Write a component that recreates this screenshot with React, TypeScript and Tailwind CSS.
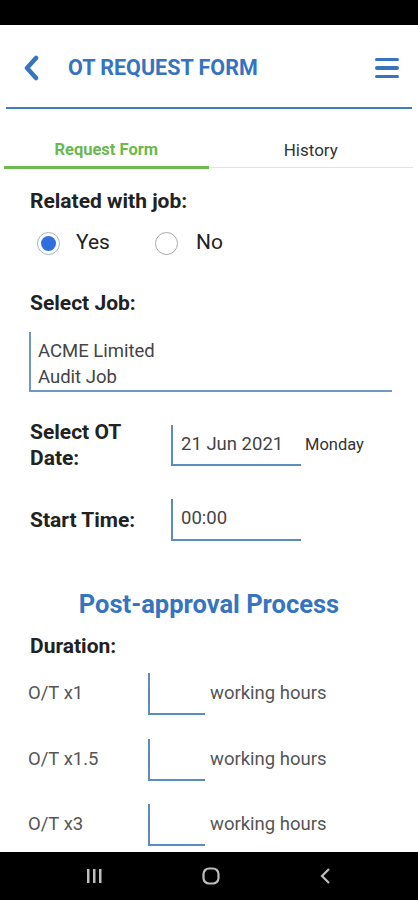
import React from "react";

const BLUE = "#3674bf";

function Radio({ checked }: { checked: boolean }) {
  return checked ? (
    <span className="flex h-[23px] w-[23px] items-center justify-center rounded-full border-[1.5px] border-[#9db5d6]">
      <span className="block h-[15px] w-[15px] rounded-full bg-[#2f6fe0]" />
    </span>
  ) : (
    <span className="block h-[23px] w-[23px] rounded-full border-[1.5px] border-[#a9a9a9]" />
  );
}

function DurRow({ label, mt }: { label: string; mt: string }) {
  return (
    <div className={`flex items-center -ml-[2px] ${mt}`}>
      <div className="w-[120px] text-[18.5px] text-[#555]">{label}</div>
      <div className="h-[42px] w-[57px] border-l-2 border-b-2 border-[#5a8cc2]" />
      <div className="ml-[5px] text-[18.5px] text-[#555]">working hours</div>
    </div>
  );
}

export default function App() {
  return (
    <div className="w-[418px] h-[900px] bg-white overflow-hidden flex flex-col" style={{ fontFamily: "Roboto, 'Liberation Sans', sans-serif" }}>
      <div className="h-[25px] bg-black shrink-0" />
      {/* header */}
      <div className="h-[82px] pt-1 flex items-center shrink-0">
        <svg className="ml-[22px]" width="20" height="26" viewBox="0 0 20 26">
          <path d="M14 3 L5 13 L14 23" fill="none" stroke={BLUE} strokeWidth="4.5" strokeLinecap="round" strokeLinejoin="round" />
        </svg>
        <div className="ml-[26px] text-[21.5px] font-bold text-[#3674bf]">OT REQUEST FORM</div>
        <div className="ml-auto mr-[19px] flex flex-col gap-[5px]">
          <span className="block h-[3.5px] w-[24px] rounded-sm bg-[#3674bf]" />
          <span className="block h-[3.5px] w-[24px] rounded-sm bg-[#3674bf]" />
          <span className="block h-[3.5px] w-[24px] rounded-sm bg-[#3674bf]" />
        </div>
      </div>
      <div className="mx-[6px] h-[2px] bg-[#3f7cc4] shrink-0" />
      {/* tabs */}
      <div className="grid grid-cols-2 ml-[4px] mr-[5px] h-[60px] shrink-0">
        <div className="flex flex-col justify-end">
          <div className="text-center text-[16.5px] font-bold text-[#6bb84e] pb-[6px] leading-[20px]">Request Form</div>
          <div className="h-[3px] bg-[#6dbb50]" />
        </div>
        <div className="flex flex-col justify-end">
          <div className="text-center text-[17px] text-[#333] pb-[7px] leading-[20px]">History</div>
          <div className="h-[1px] mb-[1px] bg-[#e2e2e2]" />
        </div>
      </div>
      {/* content */}
      <div className="px-[30px] flex flex-col">
        <div className="mt-[20px] text-[21px] leading-[24px] font-bold text-[#222]">Related with job:</div>
        <div className="mt-[18px] h-[24px] flex items-center">
          <span className="ml-[7px]"><Radio checked /></span>
          <span className="ml-[16px] text-[21px] text-[#222]">Yes</span>
          <span className="ml-[45px]"><Radio checked={false} /></span>
          <span className="ml-[18px] text-[21px] text-[#222]">No</span>
        </div>
        <div className="mt-[36px] text-[21px] leading-[24px] font-bold text-[#222]">Select Job:</div>
        <div className="mt-[17px] -ml-[1px] w-[363px] border-l-2 border-b-2 border-[#6d98c6] pt-[6px] pl-[7px] text-[18.5px] leading-[26px] text-[#444]">
          <div>ACME Limited</div>
          <div>Audit Job</div>
        </div>
        <div className="mt-[27px] flex items-start">
          <div className="w-[141px] text-[21px] leading-[26px] font-bold text-[#222]">
            Select OT
            <br />
            Date:
          </div>
          <div className="mt-[6px] h-[41px] w-[130px] border-l-2 border-b-2 border-[#5a8cc2] flex items-center pl-[8px] text-[18.5px] text-[#444]">21 Jun 2021</div>
          <div className="mt-[6px] h-[41px] flex items-center ml-[4px] text-[16.5px] text-[#333]">Monday</div>
        </div>
        <div className="mt-[28px] flex items-center">
          <div className="w-[141px] text-[21px] leading-[26px] font-bold text-[#222]">Start Time:</div>
          <div className="h-[42px] w-[130px] border-l-2 border-b-2 border-[#5a8cc2] flex items-center pl-[8px] text-[18.5px] text-[#444]">00:00</div>
        </div>
        <div className="mt-[48px] text-center text-[25.5px] leading-[30px] font-bold text-[#3674bf]">Post-approval Process</div>
        <div className="mt-[15px] text-[21px] leading-[24px] font-bold text-[#222]">Duration:</div>
        <DurRow label="O/T x1" mt="mt-[15px]" />
        <DurRow label="O/T x1.5" mt="mt-[24px]" />
        <DurRow label="O/T x3" mt="mt-[23px]" />
      </div>
      {/* nav bar */}
      <div className="mt-auto h-[48px] bg-black shrink-0 flex items-center justify-around px-[36px]">
        <svg width="18" height="16" viewBox="0 0 18 16">
          <rect x="2" y="1" width="2.5" height="14" fill="#bdbdbd" />
          <rect x="8" y="1" width="2.5" height="14" fill="#bdbdbd" />
          <rect x="14" y="1" width="2.5" height="14" fill="#bdbdbd" />
        </svg>
        <svg width="18" height="18" viewBox="0 0 18 18">
          <rect x="1.5" y="1.5" width="15" height="15" rx="5.5" fill="none" stroke="#bdbdbd" strokeWidth="2.2" />
        </svg>
        <svg width="14" height="18" viewBox="0 0 14 18">
          <path d="M10 2 L3 9 L10 16" fill="none" stroke="#bdbdbd" strokeWidth="2.2" />
        </svg>
      </div>
    </div>
  );
}
